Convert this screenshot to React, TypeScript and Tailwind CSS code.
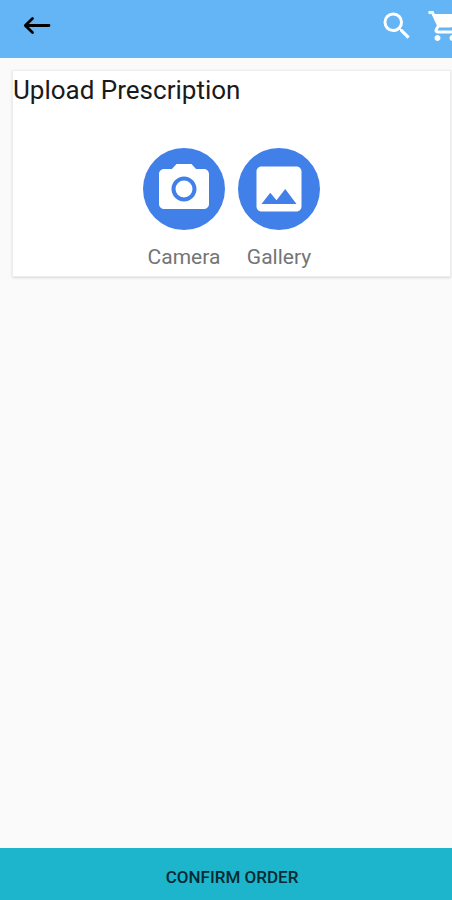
import type { ReactNode } from "react";

function SourceButton({ label, children }: { label: string; children: ReactNode }) {
  return (
    <button type="button" className="flex w-[82px] flex-col items-center">
      <span className="flex size-[82px] items-center justify-center rounded-full bg-[#4080e8]">
        <svg viewBox="0 0 24 24" className="size-[60px] fill-white" aria-hidden="true">
          {children}
        </svg>
      </span>
      <span className="mt-3 text-[21px] leading-[30px] text-[#757575]">{label}</span>
    </button>
  );
}

export default function App() {
  return (
    <div className="flex min-h-screen flex-col bg-[#fafafa] font-['Roboto',sans-serif]">
      <header className="flex h-[58px] items-start overflow-hidden bg-[#64b5f6] pt-2">
        <button type="button" aria-label="Back" className="ml-5 flex size-9 items-center justify-center">
          <svg
            viewBox="0 0 36 36"
            className="size-9 fill-none stroke-black"
            strokeWidth="2.8"
            strokeLinecap="round"
            strokeLinejoin="round"
            aria-hidden="true"
          >
            <path d="M29 17.500H5.500M12.500 10.500l-7.200 7 7.200 7" />
          </svg>
        </button>
        <div className="-mr-[11px] ml-auto flex gap-3">
          <button type="button" aria-label="Search" className="size-9">
            <svg viewBox="0 0 24 24" className="size-9 fill-white" aria-hidden="true">
              <path d="M15.5 14h-.79l-.28-.27A6.47 6.47 0 0 0 16 9.5 6.5 6.5 0 1 0 9.500 16c1.61 0 3.090-.59 4.230-1.570l.27.28v.79l5 4.990L20.490 19l-4.990-5zm-6 0C7.010 14 5 11.990 5 9.500S7.010 5 9.500 5 14 7.010 14 9.500 11.990 14 9.500 14z" />
            </svg>
          </button>
          <button type="button" aria-label="Cart" className="size-9">
            <svg viewBox="0 0 24 24" className="size-9 fill-white" aria-hidden="true">
              <path d="M7 18c-1.100 0-1.990.9-1.990 2S5.900 22 7 22s2-.9 2-2-.9-2-2-2zM1 2v2h2l3.600 7.590-1.350 2.450c-.16.28-.25.61-.25.96 0 1.100.9 2 2 2h12v-2H7.420c-.14 0-.25-.11-.25-.25l.03-.12.9-1.630h7.450c.75 0 1.410-.41 1.750-1.030l3.580-6.490A1 1 0 0 0 20 4H5.210l-.94-2H1zm16 16c-1.100 0-1.990.9-1.990 2s.89 2 1.990 2 2-.9 2-2-.9-2-2-2z" />
            </svg>
          </button>
        </div>
      </header>

      <main className="flex-1 pt-3 pr-px pl-3">
        <section className="border border-[#ededed] bg-white pb-1 shadow-sm">
          <h1 className="text-[26px] leading-[38px] text-[#1a1a1a]">Upload Prescription</h1>
          <div className="mt-[39px] flex justify-center gap-[13px]">
            <SourceButton label="Camera">
              <path d="M9 2L7.170 4H4c-1.100 0-2 .9-2 2v12c0 1.100.9 2 2 2h16c1.100 0 2-.9 2-2V6c0-1.100-.9-2-2-2h-3.170L15 2H9zm3 15c-2.760 0-5-2.240-5-5s2.240-5 5-5 5 2.240 5 5-2.240 5-5 5z" />
              <circle cx="12" cy="12" r="3.400" />
            </SourceButton>
            <SourceButton label="Gallery">
              <path d="M21 19V5c0-1.100-.9-2-2-2H5c-1.100 0-2 .9-2 2v14c0 1.100.9 2 2 2h14c1.100 0 2-.9 2-2zM8.500 13.500l2.500 3.010L14.500 12l4.500 6H5l3.500-4.500z" />
            </SourceButton>
          </div>
        </section>
      </main>

      <button type="button" className="h-[52px] w-full bg-[#1cb5cc] pt-2 pl-3 text-[17px] font-medium text-[#062a33]">
        CONFIRM ORDER
      </button>
    </div>
  );
}
